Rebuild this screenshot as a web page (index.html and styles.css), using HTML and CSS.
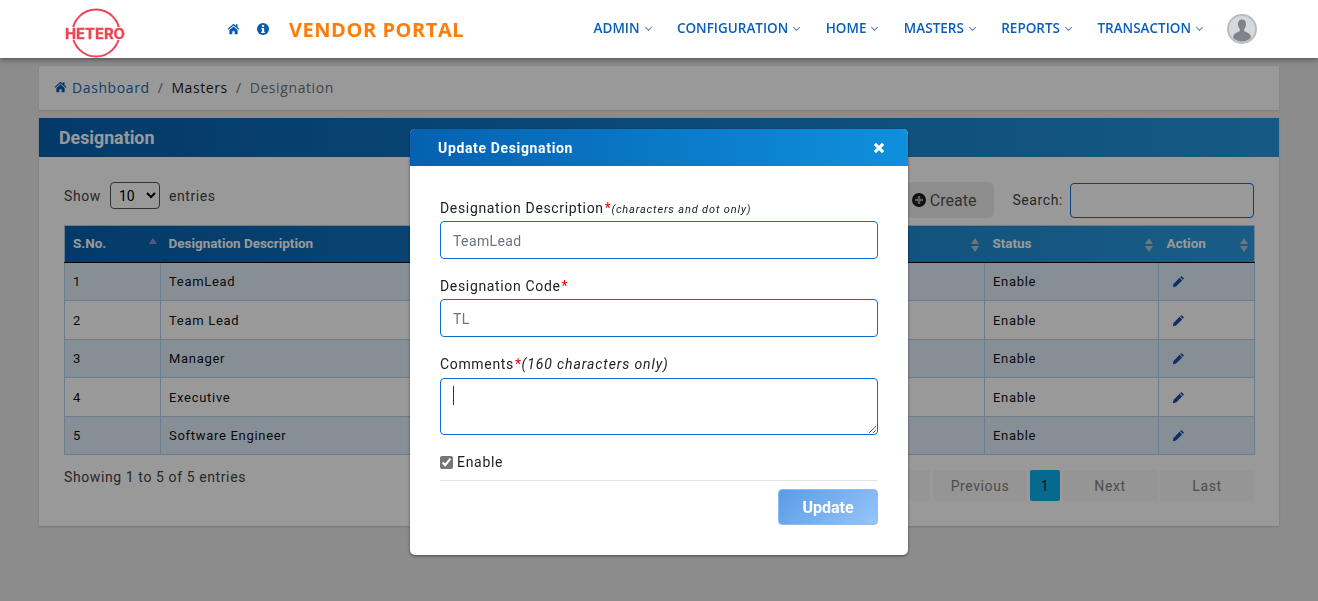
FILE: index.html
```html
<!DOCTYPE html>
<html lang="en">
<head>
    <meta charset="UTF-8">
    <meta name="viewport" content="width=device-width, initial-scale=1.0">
    <title>Vendor Portal</title>
    <link rel="stylesheet" href="styles.css">
</head>
<body>
    <!-- Top bar -->
    <header class="topbar">
        <svg class="logo" viewBox="0 0 62 52" width="62" height="52">
            <circle cx="32" cy="26" r="23.500" fill="none" stroke="#ef4453" stroke-width="2"></circle>
            <rect x="0" y="20" width="62" height="13" fill="#fff"></rect>
            <text x="1" y="31.500" class="logo-text" textLength="60" lengthAdjust="spacingAndGlyphs">HETERO</text>
        </svg>
        <a class="top-icon top-icon-home">
            <svg viewBox="0 0 16 14" width="13" height="12"><path d="M8 .6.6 6.9l1 1.100L8 2.600 14.400 8l1-1.100L13 4.800V1.200h-2v1.900z"/><path d="M2.900 8.200 8 3.900l5.100 4.300v5.300H9.400V9.800H6.600v3.700H2.900z"/></svg>
        </a>
        <a class="top-icon top-icon-info">
            <svg viewBox="0 0 14 14" width="12" height="12"><circle cx="7" cy="7" r="7"/><rect x="5.800" y="2.400" width="2.500" height="2.100" fill="#fff"/><path d="M5.200 5.700h3.100v4.500h.9v1.500H4.900v-1.500h.9v-3h-.6z" fill="#fff"/></svg>
        </a>
        <div class="portal-title">VENDOR PORTAL</div>
        <nav class="topnav">
            <a>ADMIN<i class="caret"></i></a>
            <a>CONFIGURATION<i class="caret"></i></a>
            <a>HOME<i class="caret"></i></a>
            <a>MASTERS<i class="caret"></i></a>
            <a>REPORTS<i class="caret"></i></a>
            <a>TRANSACTION<i class="caret"></i></a>
        </nav>
        <svg class="avatar" viewBox="0 0 30 30" width="30" height="30">
            <circle cx="15" cy="15" r="14" fill="#d6d9dd" stroke="#b9bcc0" stroke-width="2"></circle>
            <path d="M15 5.500c-3 0-4.200 2.200-4 5 .1 1.800.8 3.400 1.800 4.500v2c-1.500 1.200-5.300 1.800-6.300 4.300-.4 1-.4 2-.3 2.700a13 13 0 0 0 17.600 0c.1-.7.100-1.700-.3-2.700-1-2.500-4.800-3.100-6.300-4.300v-2c1-1.100 1.700-2.700 1.800-4.500.2-2.800-1-5-4-5z" fill="#7e838c"></path>
        </svg>
    </header>

    <main class="page">
        <div class="crumbs">
            <svg class="crumb-home" viewBox="0 0 16 14" width="13" height="12"><path d="M8 .6.6 6.900l1 1.100L8 2.600 14.400 8l1-1.100L13 4.800V1.200h-2v1.900z"/><path d="M2.900 8.200 8 3.900l5.100 4.300v5.300H9.400V9.800H6.600v3.700H2.900z"/></svg>
            <a class="crumb-link">Dashboard</a>
            <span class="crumb-sep">/</span>
            <span class="crumb-dark">Masters</span>
            <span class="crumb-sep">/</span>
            <span class="crumb-last">Designation</span>
        </div>

        <section class="panel">
            <h2 class="panel-head">Designation</h2>
            <div class="panel-body">
                <div class="toolbar">
                    <div class="length">
                        Show
                        <select class="length-select"><option>10</option></select>
                        entries
                    </div>
                    <div class="toolbar-right">
                        <button class="create-btn">
                            <svg viewBox="0 0 14 14" width="14" height="14"><circle cx="7" cy="7" r="7" fill="#1c1c1c"/><path d="M5.800 3h2.400v2.800H11v2.400H8.200V11H5.800V8.200H3V5.800h2.800z" fill="#999"/></svg>
                            Create
                        </button>
                        <label class="search">Search: <input type="text" class="search-input"></label>
                    </div>
                </div>

                <table class="grid">
                    <colgroup>
                        <col class="col-sno"><col class="col-desc"><col class="col-code"><col class="col-status"><col class="col-action">
                    </colgroup>
                    <thead>
                        <tr>
                            <th class="sorted">S.No.</th>
                            <th>Designation Description</th>
                            <th></th>
                            <th>Status</th>
                            <th>Action</th>
                        </tr>
                    </thead>
                    <tbody>
                        <tr><td>1</td><td>TeamLead</td><td></td><td>Enable</td><td><svg class="edit" viewBox="0 0 16 16" width="13" height="13"><path d="M11.600 1.200 14.800 4.400 13.300 5.900 10.100 2.700z"/><path d="M9.300 3.500 12.500 6.700 5 14.200 1 15l.8-4z"/></svg></td></tr>
                        <tr><td>2</td><td>Team Lead</td><td></td><td>Enable</td><td><svg class="edit" viewBox="0 0 16 16" width="13" height="13"><path d="M11.600 1.200 14.800 4.400 13.300 5.900 10.100 2.700z"/><path d="M9.300 3.500 12.500 6.700 5 14.200 1 15l.8-4z"/></svg></td></tr>
                        <tr><td>3</td><td>Manager</td><td></td><td>Enable</td><td><svg class="edit" viewBox="0 0 16 16" width="13" height="13"><path d="M11.600 1.200 14.800 4.400 13.300 5.900 10.100 2.700z"/><path d="M9.300 3.500 12.500 6.700 5 14.200 1 15l.8-4z"/></svg></td></tr>
                        <tr><td>4</td><td>Executive</td><td></td><td>Enable</td><td><svg class="edit" viewBox="0 0 16 16" width="13" height="13"><path d="M11.600 1.200 14.800 4.400 13.300 5.900 10.100 2.700z"/><path d="M9.300 3.500 12.500 6.700 5 14.200 1 15l.8-4z"/></svg></td></tr>
                        <tr><td>5</td><td>Software Engineer</td><td></td><td>Enable</td><td><svg class="edit" viewBox="0 0 16 16" width="13" height="13"><path d="M11.600 1.200 14.800 4.400 13.300 5.900 10.100 2.700z"/><path d="M9.300 3.500 12.500 6.700 5 14.200 1 15l.8-4z"/></svg></td></tr>
                    </tbody>
                </table>

                <div class="grid-foot">
                    <div class="info">Showing 1 to 5 of 5 entries</div>
                    <div class="pager">
                        <a class="page-btn">First</a>
                        <a class="page-btn">Previous</a>
                        <a class="page-num">1</a>
                        <a class="page-btn">Next</a>
                        <a class="page-btn">Last</a>
                    </div>
                </div>
            </div>
        </section>
    </main>

    <div class="backdrop"></div>

    <!-- Update dialog -->
    <div class="modal">
        <div class="modal-head">
            <span>Update Designation</span>
            <svg class="modal-close" viewBox="0 0 12 12" width="12" height="12"><path d="M3 .8 6 3.800 9 .8 11.200 3 8.200 6l3 3L9 11.200l-3-3-3 3L.8 9l3-3-3-3z"/></svg>
        </div>
        <div class="modal-body">
            <label class="field-label">Designation Description<b>*</b><em class="hint-small">(characters and dot only)</em></label>
            <input type="text" class="field-input" value="TeamLead">
            <label class="field-label">Designation Code<b>*</b></label>
            <input type="text" class="field-input" value="TL">
            <label class="field-label comment-label">Comments<b>*</b><em>(160 characters only)</em></label>
            <div class="comment-wrap">
                <textarea class="field-area"></textarea>
                <span class="text-cursor"></span>
            </div>
            <label class="check-row"><input type="checkbox" class="check" checked> Enable</label>
            <div class="modal-foot">
                <button class="update-btn">Update</button>
            </div>
        </div>
    </div>
</body>
</html>
```

FILE: styles.css
```css
* {
    box-sizing: border-box;
}
body {
    margin: 0;
    height: 601px;
    overflow: hidden;
    background: #e9e9e9;
    color: #212529;
    font-family: Roboto, "Liberation Sans", sans-serif;
    font-size: 14px;
    letter-spacing: 0.6px;
}
/* Top bar */
.topbar {
    position: relative;
    z-index: 20;
    display: flex;
    align-items: center;
    height: 58px;
    padding: 0 61px 0 64px;
    background: #fff;
    box-shadow: 0 1px 6px rgba(0,0,0,0.5);
}
.logo {
    flex: none;
    margin-top: 8px;
}
.logo-text {
    font-family: Inter, "Liberation Sans", sans-serif;
    font-size: 14px;
    font-weight: 700;
    fill: #ef4453;
    stroke: #ef4453;
    stroke-width: 0.3px;
    letter-spacing: 0;
}
.top-icon {
    display: flex;
    fill: #0b5cad;
}
.top-icon-home {
    margin-left: 101px;
}
.top-icon-info {
    margin-left: 17px;
}
.portal-title {
    margin-left: 20px;
    font-family: "Open Sans", sans-serif;
    font-size: 20px;
    font-weight: 700;
    letter-spacing: 0.55px;
    color: #ff7c0a;
}
.topnav {
    display: flex;
    gap: 25.400px;
    margin-left: auto;
    padding-bottom: 2px;
    font-family: "Open Sans", sans-serif;
    font-size: 13.500px;
    font-weight: 600;
    letter-spacing: 0;
    color: #0a5fba;
}
.topnav a {
    display: flex;
    align-items: center;
}
.caret {
    width: 5px;
    height: 5px;
    margin: -2px 1px 0 6px;
    border-right: 1px solid #5a7fa8;
    border-bottom: 1px solid #5a7fa8;
    transform: rotate(45deg);
}
.avatar {
    flex: none;
    margin-left: 24px;
}
/* Page */
.page {
    padding: 8px 39px;
}
.crumbs {
    display: flex;
    align-items: center;
    height: 44px;
    padding: 0 15px 2px;
    background: #fff;
    font-family: "Open Sans", sans-serif;
    font-size: 14px;
    box-shadow: 0 1px 2px rgba(0,0,0,0.1);
}
.crumb-home {
    fill: #0b5cad;
    margin-right: 5px;
}
.crumb-link {
    color: #2566b8;
}
.crumb-dark {
    color: #1a1a1a;
}
.crumb-last {
    color: #6c757d;
}
.crumb-sep {
    margin: 0 8px;
    color: #6c757d;
}
.panel {
    margin-top: 8px;
    background: #fff;
    box-shadow: 0 1px 2px rgba(0,0,0,0.15);
}
.panel-head {
    margin: 0;
    height: 39px;
    padding: 0 20px;
    line-height: 39px;
    font-size: 17.800px;
    font-weight: 700;
    letter-spacing: 0;
    color: #fff;
    background: linear-gradient(90deg, #0561b0, #2496dd);
}
.panel-body {
    padding: 25px;
}
.toolbar {
    display: flex;
    justify-content: space-between;
    align-items: flex-start;
    height: 43px;
}
.length {
    display: flex;
    align-items: center;
    gap: 9px;
    height: 27px;
    color: #444;
}
.length-select {
    width: 50px;
    height: 27px;
    padding: 0 4px;
    background: #fff;
    border: 1px solid #555;
    border-radius: 4px;
    font: inherit;
    color: #000;
}
.toolbar-right {
    display: flex;
    align-items: center;
    gap: 18px;
}
.create-btn {
    display: flex;
    align-items: center;
    gap: 4px;
    height: 36px;
    padding: 0 18px;
    background: #ececec;
    border: 0;
    border-radius: 6px;
    font-family: Roboto, sans-serif;
    font-size: 16px;
    letter-spacing: 0;
    color: #555;
}
.search {
    display: flex;
    align-items: center;
    gap: 7px;
    color: #444;
}
.search-input {
    width: 184px;
    height: 35px;
    background: #fff;
    border: 1px solid #0a6ed1;
    border-radius: 4px;
}
/* Table */
.grid {
    width: 1190px;
    border-collapse: collapse;
    table-layout: fixed;
    border: 1px solid #b4d3ec;
}
.col-sno { width: 96px; }
.col-desc { width: 380px; }
.col-code { width: 444px; }
.col-status { width: 174px; }
.col-action { width: 96px; }
.grid thead {
    background: linear-gradient(90deg, #0561b0, #2a9be0);
}
.grid th {
    position: relative;
    height: 37px;
    padding: 0 8px 2px;
    border-bottom: 1px solid #000;
    text-align: left;
    font-size: 13.450px;
    font-weight: 700;
    letter-spacing: 0;
    color: #fff;
}
/* sort arrows */
.grid th::before,
.grid th::after {
    content: "";
    position: absolute;
    right: 6px;
    border-left: 4.500px solid transparent;
    border-right: 4.500px solid transparent;
}
.grid th::before {
    top: 12px;
    border-bottom: 6px solid #b8c4d0;
}
.grid th::after {
    top: 20px;
    border-top: 6px solid #b8c4d0;
}
.grid th.sorted::before {
    right: 4px;
    top: 12px;
    border-bottom-color: #9a8fd8;
}
.grid th.sorted::after {
    display: none;
}
.grid td {
    height: 38.400px;
    padding: 0.5px 8px 0;
    border: 1px solid #b4d3ec;
    color: #111;
    font-size: 13px;
    letter-spacing: 0.7px;
}
.grid tbody tr:nth-child(odd) {
    background: #e2effa;
}
.edit {
    display: block;
    margin-left: 5px;
    fill: #1a4fa8;
}
.grid-foot {
    display: flex;
    justify-content: space-between;
    align-items: flex-start;
    margin-top: 15px;
}
.info {
    margin-top: -1px;
    color: #444;
}
.pager {
    display: flex;
    gap: 3px;
}
.page-btn,
.page-num {
    height: 31px;
    line-height: 33px;
    text-align: center;
    border-radius: 2px;
    color: #808080;
}
.page-btn {
    width: 94px;
    background: #f8f8f8;
}
.page-num {
    width: 30px;
    background: #0ab0ee;
    color: #222;
}
/* Modal */
.backdrop {
    position: fixed;
    inset: 0;
    z-index: 10;
    background: rgba(0,0,0,0.4);
}
.modal {
    position: fixed;
    left: 410px;
    top: 129px;
    z-index: 30;
    width: 498px;
    height: 426px;
    background: #fff;
    border-radius: 5px;
    box-shadow: 0 1px 3px rgba(0,0,0,0.5);
    overflow: hidden;
}
.modal-head {
    display: flex;
    justify-content: space-between;
    align-items: center;
    height: 37px;
    padding: 0 23px 0 28px;
    background: linear-gradient(90deg, #0561b0, #0f90dc);
    font-size: 14px;
    font-weight: 700;
    letter-spacing: 0.65px;
    color: #fff;
}
.modal-close {
    fill: #fff;
}
.modal-body {
    padding: 33px 30px 0;
}
.field-label {
    display: block;
    height: 21px;
    margin-bottom: 1px;
    line-height: 19px;
    color: #222;
    letter-spacing: 0.66px;
}
.comment-label {
    margin-bottom: 2px;
}
.field-label b {
    margin-left: 1px;
    font-weight: 400;
    color: #e00;
}
.field-label em {
    font-size: 14px;
    letter-spacing: 0.9px;
}
.field-label .hint-small {
    font-size: 11px;
    letter-spacing: 0.85px;
}
.field-input {
    display: block;
    width: 438px;
    height: 38px;
    margin-bottom: 18px;
    padding: 2px 12px 0;
    background: #fff;
    border: 1px solid #0a6ed1;
    border-radius: 4px;
    font: inherit;
    letter-spacing: 0.4px;
    color: #6c757d;
}
.comment-wrap {
    position: relative;
    width: 438px;
    height: 57px;
}
.field-area {
    display: block;
    width: 438px;
    height: 57px;
    background: #fff;
    border: 1px solid #0a6ed1;
    border-radius: 4px;
}
.text-cursor {
    position: absolute;
    left: 13px;
    top: 8px;
    width: 1px;
    height: 19px;
    background: #333;
}
.check-row {
    display: flex;
    align-items: center;
    gap: 4px;
    height: 20px;
    margin-top: 17px;
    color: #222;
    letter-spacing: 0.7px;
}
.check {
    width: 13px;
    height: 13px;
    margin: 0;
    accent-color: #767676;
}
.modal-foot {
    display: flex;
    justify-content: flex-end;
    margin-top: 8px;
    padding-top: 8px;
    border-top: 1px solid #e3e3e3;
}
.update-btn {
    width: 100px;
    height: 36px;
    background: linear-gradient(135deg, #5a9be5, #95c5fa);
    border: 1px solid #8fbdf0;
    border-radius: 4px;
    font-family: Roboto, sans-serif;
    font-size: 16px;
    font-weight: 700;
    letter-spacing: 0;
    color: #fff;
}
```
